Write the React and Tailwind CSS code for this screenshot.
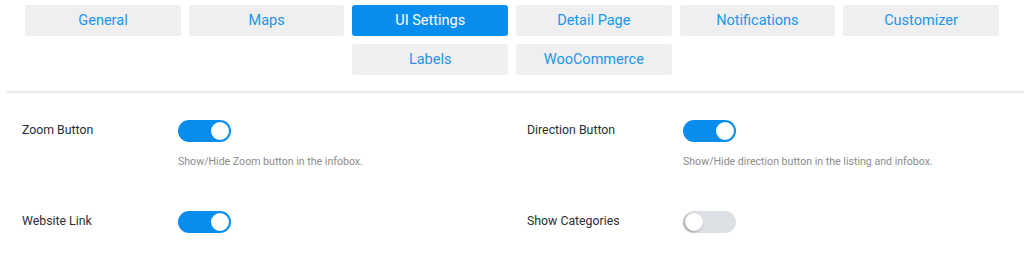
import { useState } from 'react'

const TABS = ['General', 'Maps', 'UI Settings', 'Detail Page', 'Notifications', 'Customizer', 'Labels', 'WooCommerce']

const SETTINGS = [
  { id: 'zoom', label: 'Zoom Button', help: 'Show/Hide Zoom button in the infobox.', on: true },
  { id: 'direction', label: 'Direction Button', help: 'Show/Hide direction button in the listing and infobox.', on: true },
  { id: 'website', label: 'Website Link', help: '', on: true },
  { id: 'categories', label: 'Show Categories', help: '', on: false },
]

function Toggle({ checked, onChange }) {
  return (
    <button
      type="button"
      onClick={() => onChange(!checked)}
      className={`flex h-[22px] w-[53px] items-center rounded-full p-[2px] ${checked ? 'justify-end bg-[#078ded]' : 'justify-start bg-[#dde0e5]'}`}
    >
      <span className={`block h-[18px] w-[18px] rounded-full bg-white ${checked ? '' : 'shadow-[-1px_1px_3px_rgba(0,0,0,0.35)]'}`} />
    </button>
  )
}

export default function App() {
  const [active, setActive] = useState('UI Settings')
  const [values, setValues] = useState(Object.fromEntries(SETTINGS.map((s) => [s.id, s.on])))

  return (
    <div className="h-[270px] w-[1024px] overflow-hidden bg-white font-['Roboto',sans-serif]">
      <nav className="flex flex-wrap justify-center gap-x-[8px] gap-y-[8px] px-[25px] pt-[5px]">
        {TABS.map((tab) => (
          <button
            key={tab}
            type="button"
            onClick={() => setActive(tab)}
            className={`h-[31px] w-[155.6px] rounded-[3px] text-[14.5px] ${active === tab ? 'bg-[#078ded] text-white' : 'bg-[#efefef] text-[#2196ea]'}`}
          >
            {tab}
          </button>
        ))}
      </nav>
      <div className="ml-[7px] mt-[16px] h-[2px] bg-[#e8e9ed]" />
      <section className="grid grid-cols-[505px_1fr] gap-y-[20px] pl-[22px] pt-[27px]">
        {SETTINGS.map((item) => (
          <div key={item.id} className="flex h-[71px]">
            <p className="w-[156px] pt-[0px] text-[12.3px] leading-[20px] text-[#2a2d33]">{item.label}</p>
            <div>
              <Toggle checked={values[item.id]} onChange={(v) => setValues({ ...values, [item.id]: v })} />
              {item.help ? <p className="mt-[13px] text-[10.6px] leading-[14px] text-[#8c8c8c]">{item.help}</p> : null}
            </div>
          </div>
        ))}
      </section>
    </div>
  )
}
